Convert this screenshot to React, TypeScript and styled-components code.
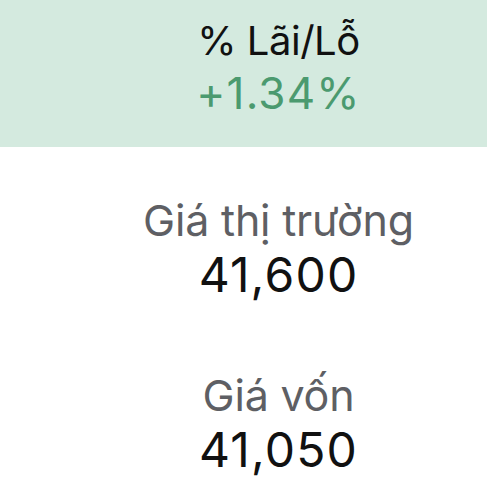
import React from "react";
import styled, { createGlobalStyle } from "styled-components";

const Global = createGlobalStyle`
  html, body { margin: 0; padding: 0; background: #ffffff; }
  body { font-family: Inter, "Noto Sans", "DejaVu Sans", sans-serif; -webkit-font-smoothing: antialiased; }
`;

const Column = styled.div`
  display: flex;
  flex-direction: column;
  width: 100%;
`;

const Cell = styled.div<{ $highlight?: boolean }>`
  display: flex;
  flex-direction: column;
  align-items: center;
  gap: ${(p) => (p.$highlight ? "2px" : "1px")};
  padding: ${(p) => (p.$highlight ? "17px 0 28px 70px" : "47px 0 19px 70px")};
  background: ${(p) => (p.$highlight ? "#d4eadf" : "#ffffff")};
`;

const Label = styled.div<{ $highlight?: boolean }>`
  font-size: ${(p) => (p.$highlight ? "40px" : "43px")};
  line-height: ${(p) => (p.$highlight ? "48px" : "52px")};
  font-weight: 400;
  letter-spacing: ${(p) => (p.$highlight ? "-0.5px" : "-0.2px")};
  color: ${(p) => (p.$highlight ? "#111111" : "#5e5f64")};
  white-space: nowrap;
`;

const Value = styled.div<{ $highlight?: boolean; $tone?: "up" | "plain" }>`
  font-size: ${(p) => (p.$highlight ? "44px" : "48px")};
  line-height: ${(p) => (p.$highlight ? "52px" : "56px")};
  font-weight: 400;
  letter-spacing: 1.2px;
  color: ${(p) => (p.$tone === "up" ? "#4b9a6f" : "#111111")};
  white-space: nowrap;
`;

type Stat = { label: string; value: string; highlight?: boolean; tone?: "up" | "plain" };

const stats: Stat[] = [
  { label: "% Lãi/Lỗ", value: "+1.34%", highlight: true, tone: "up" },
  { label: "Giá thị trường", value: "41,600" },
  { label: "Giá vốn", value: "41,050" },
];

export default function App() {
  return (
    <>
      <Global />
      <Column>
        {stats.map((s) => (
          <Cell key={s.label} $highlight={s.highlight}>
            <Label $highlight={s.highlight}>{s.label}</Label>
            <Value $highlight={s.highlight} $tone={s.tone ?? "plain"}>
              {s.value}
            </Value>
          </Cell>
        ))}
      </Column>
    </>
  );
}
